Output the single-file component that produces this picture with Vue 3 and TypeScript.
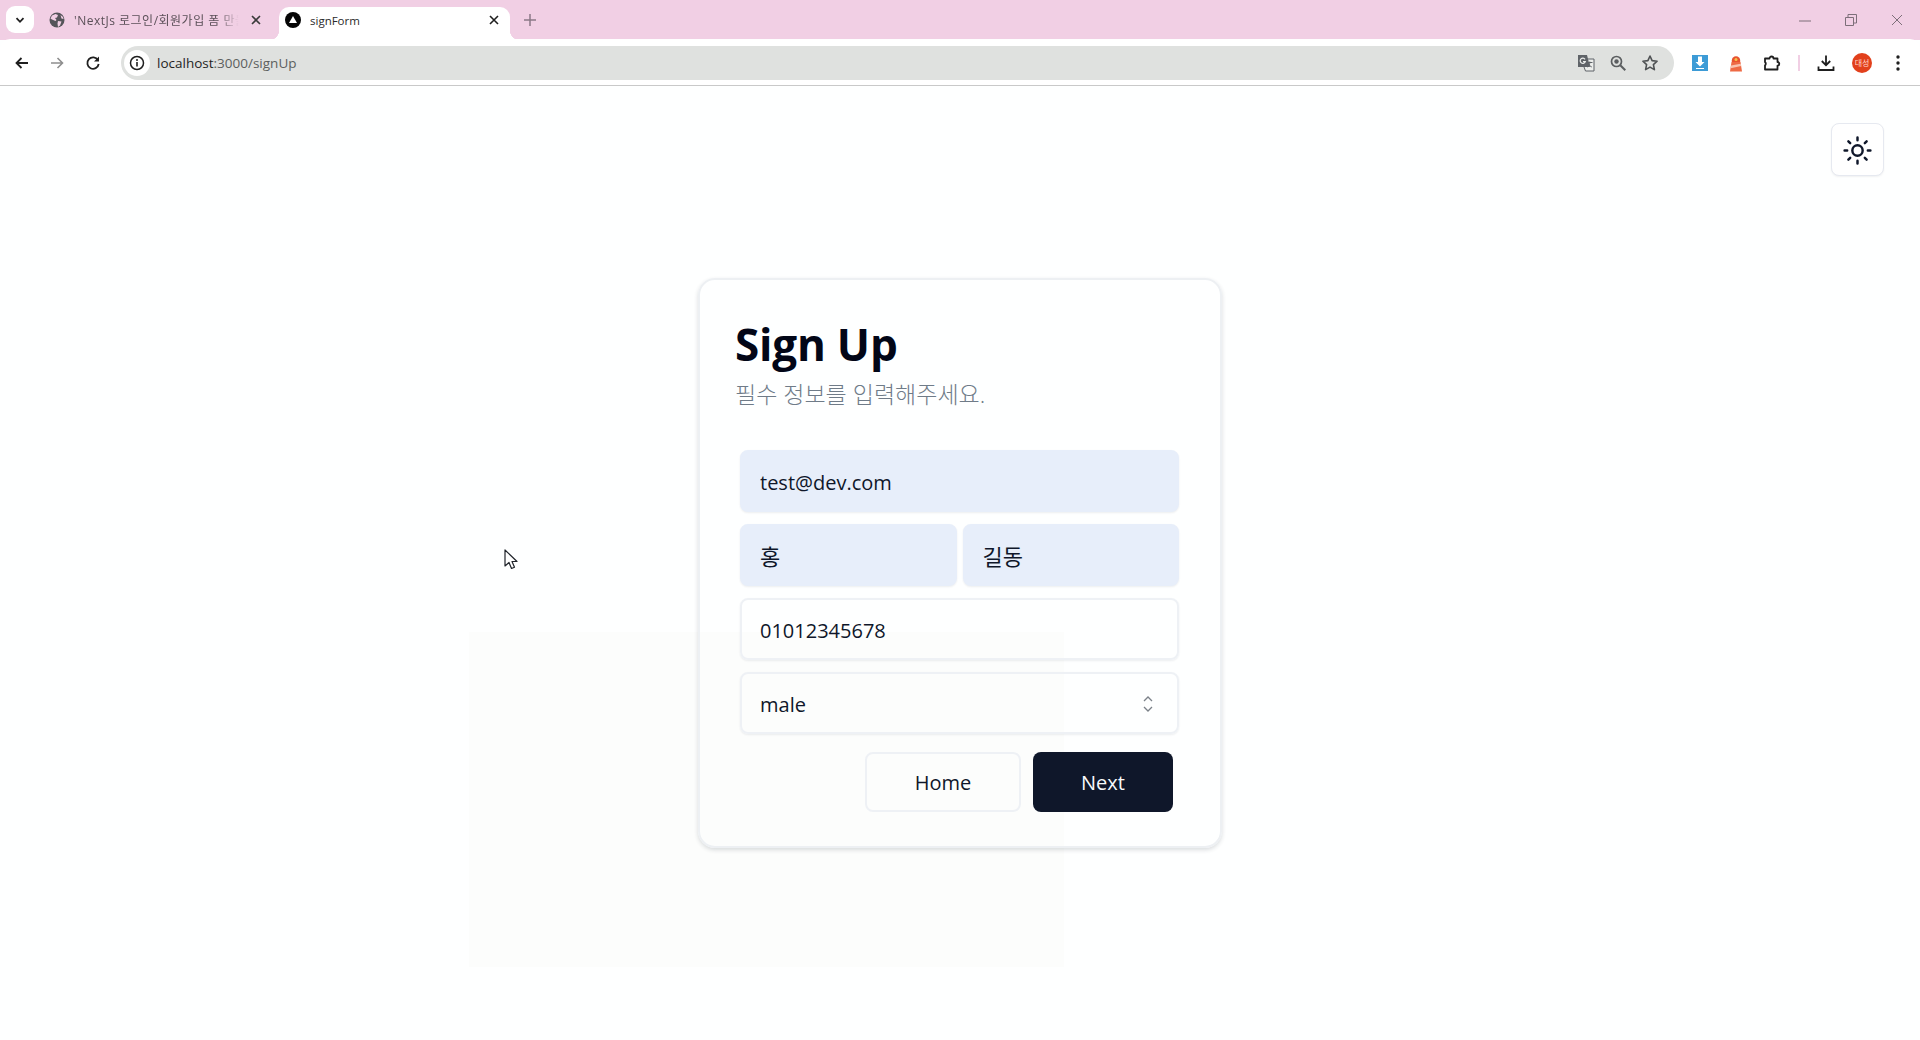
<script setup lang="ts">
const extras = [
  { key: "email", value: "test@dev.com", filled: true },
];
const names = ["홍", "길동"];
</script>

<template>
  <div class="screen">
    <header class="tabstrip">
      <button class="tab-search">
        <svg width="12" height="12" viewBox="0 0 12 12"><path d="M2.500 4.200 6 7.800l3.500-3.600" fill="none" stroke="#1f1f1f" stroke-width="1.800" /></svg>
      </button>
      <div class="tab first">
        <svg class="favicon" width="16" height="16" viewBox="0 0 16 16">
          <circle cx="8" cy="8" r="7.500" fill="#55555a" />
          <path d="M3 3.500 6.500 2l2.500 1-1 2.500L6 6l1.500 2-1 1L3 7.500 1.500 6.500ZM9 9l3.500.5L11 13.500 9 15l-.5-3.500ZM11.500 3 14 5l.5 2-2-.5Z" fill="#f1cfe4" />
        </svg>
        <span class="tab-title fade">'NextJs 로그인/회원가입 폼 만들기</span>
        <svg class="tab-close" width="10" height="10" viewBox="0 0 10 10"><path d="m1 1 8 8M9 1 1 9" stroke="#3a3a3a" stroke-width="1.600" /></svg>
      </div>
      <div class="tab active">
        <svg class="favicon" width="16" height="16" viewBox="0 0 16 16">
          <circle cx="8" cy="8" r="8" fill="#050505" />
          <path d="m8 4 4 7H4Z" fill="#fff" />
        </svg>
        <span class="tab-title dark">signForm</span>
        <svg class="tab-close" width="10" height="10" viewBox="0 0 10 10"><path d="m1 1 8 8M9 1 1 9" stroke="#1f1f1f" stroke-width="1.600" /></svg>
      </div>
      <svg class="tab-new" width="14" height="14" viewBox="0 0 14 14"><path d="M7 1v12M1 7h12" stroke="#8b7a86" stroke-width="1.500" /></svg>
      <div class="window-controls">
        <svg width="14" height="14" viewBox="0 0 14 14"><path d="M1 8h12" stroke="#7d6f79" stroke-width="1" /></svg>
        <svg width="14" height="14" viewBox="0 0 14 14"><path d="M1.500 4.500h8v8h-8zM4 4.500V1.500h8.500V10H9.500" fill="none" stroke="#7d6f79" stroke-width="1" /></svg>
        <svg width="14" height="14" viewBox="0 0 14 14"><path d="m2 2 10 10M12 2 2 12" stroke="#7d6f79" stroke-width="1" /></svg>
      </div>
    </header>

    <nav class="toolbar">
      <span class="tool">
        <svg width="16" height="16" viewBox="0 0 16 16"><path d="M14 8H3M7.500 3 2.500 8l5 5" fill="none" stroke="#1f1f1f" stroke-width="1.800" /></svg>
      </span>
      <span class="tool">
        <svg width="16" height="16" viewBox="0 0 16 16"><path d="M2 8h11M8.500 3l5 5-5 5" fill="none" stroke="#8e8e8e" stroke-width="1.600" /></svg>
      </span>
      <span class="tool">
        <svg width="16" height="16" viewBox="0 0 16 16"><path d="M13 5.200A5.700 5.700 0 1 0 13.700 9" fill="none" stroke="#1f1f1f" stroke-width="1.800" /><path d="M14 1.500v5H9Z" fill="#1f1f1f" /></svg>
      </span>
      <div class="omnibox">
        <span class="site-info">
          <svg width="16" height="16" viewBox="0 0 16 16">
            <circle cx="8" cy="8" r="6.500" fill="none" stroke="#1f1f1f" stroke-width="1.500" />
            <path d="M8 7v4.500" stroke="#1f1f1f" stroke-width="1.600" />
            <circle cx="8" cy="5" r="1" fill="#1f1f1f" />
          </svg>
        </span>
        <span class="url">localhost<span class="url-rest">:3000/signUp</span></span>
        <span class="omni-actions">
          <svg width="18" height="18" viewBox="0 0 18 18">
            <path d="M7.500 5H17v12H8.500L7 13" fill="#eceeec" stroke="#5f6368" stroke-width="1" />
            <path d="M1 1h9l3 12H1Z" fill="#5f6368" />
            <path d="M10 8.500h5.500M12.800 7.500v1c0 2-1 3.500-2.300 4.500M11.800 10.500c.7 1.200 1.700 2 3 2.500" fill="none" stroke="#5f6368" stroke-width="1" />
            <path d="M8 5.300A2.600 2.600 0 1 0 8.300 7.500H6" fill="none" stroke="#eceeec" stroke-width="1.200" />
          </svg>
          <svg width="18" height="18" viewBox="0 0 18 18">
            <circle cx="7.500" cy="7.500" r="5" fill="none" stroke="#5b5e60" stroke-width="1.700" />
            <path d="m11.300 11.300 5 5" stroke="#5b5e60" stroke-width="2" />
            <circle cx="7.500" cy="7.500" r="2.200" fill="#5b5e60" />
          </svg>
          <svg width="18" height="18" viewBox="0 0 18 18"><path d="m9 2 2.100 4.600 5 .6-3.700 3.400 1 5L9 13.100 4.600 15.600l1-5L1.900 7.200l5-.6Z" fill="none" stroke="#4f5254" stroke-width="1.600" stroke-linejoin="round" /></svg>
        </span>
      </div>
      <div class="extensions">
        <span class="ext">
          <svg width="16" height="16" viewBox="0 0 16 16">
            <rect width="16" height="16" fill="#3c9bd6" />
            <path d="M6 1.500h4V7h2.500L8 11.500 3.500 7H6Z" fill="#fff" />
            <path d="M4 13.500h8" stroke="#fff" stroke-width="1" />
          </svg>
        </span>
        <span class="ext">
          <svg width="14" height="17" viewBox="0 0 14 17">
            <path d="M2.800 5.500a4.200 4.200 0 0 1 8.400 0V7H2.800Z" fill="#e8532f" />
            <circle cx="7" cy="4.500" r="1.500" fill="#f6c24a" />
            <path d="M2.500 7h9l1.500 9.500H1Z" fill="#ee6a45" />
            <path d="M2 10.500 11.800 8.800l.4 2.300L1.700 13.200Z" fill="#f9c4b0" />
          </svg>
        </span>
        <span class="ext">
          <svg width="18" height="18" viewBox="0 0 18 18"><path d="M2 4.500h4.500a2 2 0 0 1 4 0h4V8a1.800 1.800 0 0 1 0 3.600V15.500H2V11.500a2.300 2.300 0 0 0 0-3.500Z" fill="none" stroke="#1f1f1f" stroke-width="1.800" stroke-linejoin="round" /></svg>
        </span>
        <i class="ext-sep"></i>
        <span class="ext">
          <svg width="18" height="18" viewBox="0 0 18 18"><path d="M9 1.500V11M4.800 7 9 11.200 13.200 7M1.500 12.500v3.500h15v-3.500" fill="none" stroke="#1f1f1f" stroke-width="1.800" /></svg>
        </span>
        <span class="ext"><span class="avatar">대성</span></span>
        <span class="ext">
          <svg width="6" height="16" viewBox="0 0 6 16"><circle cx="3" cy="2" r="1.700" fill="#1f1f1f" /><circle cx="3" cy="8" r="1.700" fill="#1f1f1f" /><circle cx="3" cy="14" r="1.700" fill="#1f1f1f" /></svg>
        </span>
      </div>
    </nav>

    <main class="page">
      <div class="ghost"></div>
      <button class="theme-toggle" aria-label="theme">
        <svg width="31" height="31" viewBox="0 0 24 24" fill="none" stroke="#0f172a" stroke-width="1.900" stroke-linecap="round">
          <circle cx="12" cy="12" r="4" />
          <path d="M12 2v2M12 20v2M4.930 4.930l1.410 1.410M17.660 17.660l1.410 1.410M2 12h2M20 12h2M6.340 17.660l-1.410 1.410M19.070 4.930l-1.410 1.410" />
        </svg>
      </button>

      <section class="card">
        <h1 class="title">Sign Up</h1>
        <p class="subtitle">필수 정보를 입력해주세요.</p>

        <form class="form" @submit.prevent>
          <input
            v-for="item in extras"
            :key="item.key"
            class="field filled"
            :value="item.value"
          />
          <div class="name-row">
            <input v-for="name in names" :key="name" class="field filled" :value="name" />
          </div>
          <input class="field" value="01012345678" />
          <div class="field select">
            <span>male</span>
            <svg width="14" height="20" viewBox="0 0 14 20"><path d="m3 7 4-4 4 4M3 13l4 4 4-4" fill="none" stroke="#7b8188" stroke-width="1.300" /></svg>
          </div>
          <div class="actions">
            <button class="btn outline" type="button">Home</button>
            <button class="btn primary" type="submit">Next</button>
          </div>
        </form>
      </section>

      <svg class="cursor" width="15" height="21" viewBox="0 0 15 21">
        <path d="M1 1v16l4-3.500 2.500 6 3-1.300-2.500-5.700H13Z" fill="#fff" stroke="#20242a" stroke-width="1.200" stroke-linejoin="round" />
      </svg>
    </main>
  </div>
</template>

<style>
html,
body {
  margin: 0;
  background: #feffff;
}
</style>

<style scoped>
.screen {
  width: 1920px;
  height: 1040px;
  display: flex;
  flex-direction: column;
  overflow: hidden;
  font-family: "Open Sans", "Noto Sans CJK KR", sans-serif;
}

/* browser chrome */
.tabstrip {
  height: 40px;
  flex: none;
  display: flex;
  align-items: flex-start;
  background: #f1cfe4;
  padding: 7px 0 0 6px;
  box-sizing: border-box;
}

.tab-search {
  width: 28px;
  height: 27px;
  margin-top: -1px;
  padding: 0;
  border: 0;
  border-radius: 9px;
  background: #fff;
  display: flex;
  align-items: center;
  justify-content: center;
}

.tab {
  position: relative;
  height: 33px;
  display: flex;
  align-items: center;
  box-sizing: border-box;
  border-radius: 10px 10px 0 0;
}

.tab.first {
  width: 233px;
  margin-left: 8px;
  gap: 9px;
  padding: 0 14px 7px 7px;
}

.tab.active {
  width: 231px;
  margin-left: 4px;
  gap: 9px;
  padding: 0 11px 7px 6px;
  background: #fff;
}

.tab.active::before,
.tab.active::after {
  content: "";
  position: absolute;
  bottom: 0;
  width: 10px;
  height: 10px;
}

.tab.active::before {
  left: -10px;
  background: radial-gradient(circle at 0 0, transparent 10px, #fff 10.500px);
}

.tab.active::after {
  right: -10px;
  background: radial-gradient(circle at 100% 0, transparent 10px, #fff 10.500px);
}

.favicon {
  flex: none;
}

.tab-title {
  flex: 1;
  min-width: 0;
  white-space: nowrap;
  overflow: hidden;
  font-size: 12px;
  color: #5b5058;
}

.tab-title.fade {
  letter-spacing: 0.5px;
  -webkit-mask-image: linear-gradient(to right, #000 86%, transparent 98%);
  mask-image: linear-gradient(to right, #000 86%, transparent 98%);
}

.tab-title.dark {
  font-size: 11.500px;
  color: #2a2a2a;
}

.tab-close {
  flex: none;
}

.tab-new {
  margin: 6px 0 0 13px;
}

.window-controls {
  margin-left: auto;
  display: flex;
  gap: 32px;
  padding: 6px 16px 0 0;
}

.toolbar {
  height: 47px;
  flex: none;
  display: flex;
  align-items: center;
  padding: 2px 4px 0;
  box-sizing: border-box;
  background: #fff;
  border-bottom: 1px solid #c9c9c9;
  border-radius: 10px 10px 0 0;
  margin-top: -1px;
}

.tool {
  width: 35.500px;
  display: flex;
  justify-content: center;
}

.omnibox {
  width: 1553px;
  height: 34px;
  margin-left: 10.500px;
  flex: none;
  display: flex;
  align-items: center;
  border-radius: 17px;
  background: #dfe1df;
  box-sizing: border-box;
}

.site-info {
  width: 26px;
  height: 26px;
  margin-left: 3px;
  border-radius: 50%;
  background: #fff;
  display: flex;
  align-items: center;
  justify-content: center;
}

.url {
  margin-left: 7px;
  font-size: 13.500px;
  color: #1f1f1f;
}

.url-rest {
  color: #5c5f5e;
}

.omni-actions {
  margin-left: auto;
  display: flex;
  gap: 14px;
  padding-right: 15px;
}

.extensions {
  flex: 1;
  display: flex;
  align-items: center;
  margin-left: 8px;
}

.ext {
  width: 36px;
  display: flex;
  justify-content: center;
  flex: none;
}

.ext-sep {
  width: 2px;
  height: 16px;
  background: #f1cfe4;
  margin: 0 8px;
  flex: none;
}

.avatar {
  width: 20px;
  height: 20px;
  border-radius: 50%;
  background: #e2401c;
  color: #ffd9cc;
  font-size: 8px;
  line-height: 20px;
  text-align: center;
}

/* page */
.page {
  position: relative;
  flex: 1;
  display: flex;
  align-items: center;
  justify-content: center;
  background: #feffff;
}

.ghost {
  position: absolute;
  left: 469px;
  top: 546px;
  width: 595px;
  height: 335px;
  background: #fcfdfc;
}

.theme-toggle {
  position: absolute;
  top: 37px;
  right: 36px;
  width: 53px;
  height: 53px;
  padding: 1px 0 0;
  border: 1px solid #e6e9f0;
  border-radius: 8px;
  background: #fff;
  box-shadow: 0 1px 2px rgba(15, 23, 42, 0.06);
  display: flex;
  align-items: center;
  justify-content: center;
}

.cursor {
  position: absolute;
  left: 504px;
  top: 463px;
}

.card {
  position: relative;
  width: 524px;
  height: 570px;
  box-sizing: border-box;
  padding: 34px 35px 0;
  border: 2px solid #edf0f3;
  border-radius: 17px;
  box-shadow: 0 2px 4px rgba(30, 41, 59, 0.16);
  color: #020617;
}

.title {
  margin: 0 0 4px;
  font-size: 44px;
  line-height: 60px;
  font-weight: 700;
  letter-spacing: -0.2px;
}

.subtitle {
  margin: 0;
  font-size: 23px;
  line-height: 32px;
  font-weight: 300;
  color: #6f7b88;
}

.form {
  margin: 40px 6px 0 5px;
  display: flex;
  flex-direction: column;
  gap: 12px;
}

.field {
  height: 62px;
  width: 100%;
  box-sizing: border-box;
  padding: 2px 18px 0;
  border: 2px solid #eef1f5;
  border-radius: 8px;
  background: transparent;
  font: inherit;
  font-size: 20px;
  color: #0f172a;
  outline: none;
  box-shadow: 0 1px 2px rgba(30, 41, 59, 0.08);
}

.field.filled {
  background: #e7eefa;
  border-color: #e7eefa;
}

.name-row {
  display: flex;
  gap: 6px;
}

.name-row .field {
  min-width: 0;
  flex: 1;
  font-size: 22px;
  padding-top: 0;
}

.select {
  display: flex;
  align-items: center;
  justify-content: space-between;
  padding-right: 22px;
}

.actions {
  display: flex;
  justify-content: flex-end;
  gap: 12px;
  margin-top: 6px;
  padding-right: 6px;
}

.btn {
  height: 60px;
  border-radius: 8px;
  font: inherit;
  font-size: 20px;
  padding: 0;
}

.btn.outline {
  width: 156px;
  background: transparent;
  border: 2px solid #eef1f5;
  color: #0f172a;
}

.btn.primary {
  width: 140px;
  background: #0f172a;
  border: 0;
  color: #f8fafc;
}
</style>
